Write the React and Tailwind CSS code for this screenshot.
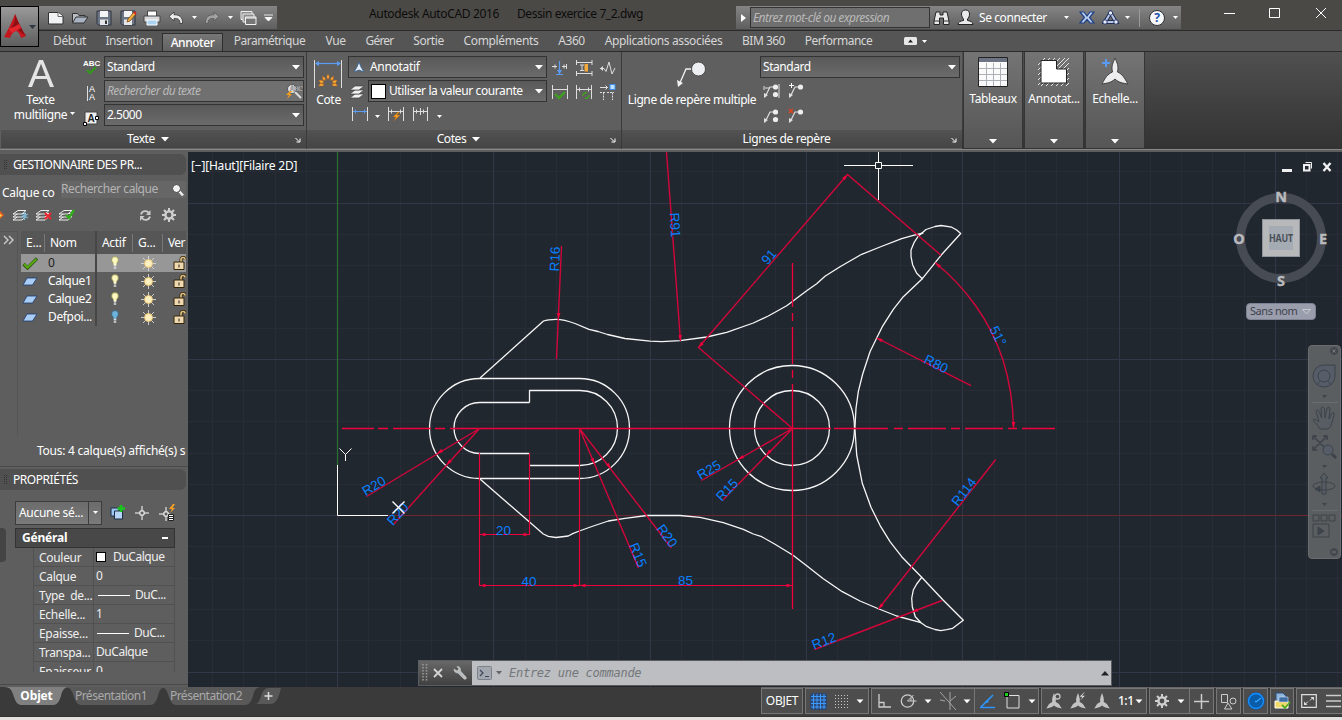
import React from "react";

const UI = "font-['Noto_Sans','Open_Sans',sans-serif] tracking-[-0.2px]";

function Ic({ w = 18, h = 18, className = "", children }) {
  return (
    <svg width={w} height={h} viewBox={`0 0 ${w} ${h}`} fill="none" className={"block shrink-0 " + className}>
      {children}
    </svg>
  );
}

function Caret({ big = false, className = "" }) {
  return big ? (
    <Ic w={8} h={5} className={className}><path d="M0 0h8l-4 4.5z" fill="#fff" /></Ic>
  ) : (
    <Ic w={5} h={3} className={className}><path d="M0 0h5L2.5 3z" fill="#fff" /></Ic>
  );
}

/* ---------- title bar ---------- */
function QuickAccess() {
  const cell = "flex h-full w-6 shrink-0 items-center justify-center";
  const small = "flex h-full w-3 shrink-0 items-center justify-center";
  return (
    <div className="mt-1.5 flex h-[23px] w-[238px] items-center bg-gradient-to-b from-[#858585] to-[#5f5f5f] pl-[5px]">
      <div className={cell}><Ic w={18} h={14}><path d="M1.500 1.500h10l4.500 3.500v8h-14.500z" fill="#f1f2f4" stroke="#333" /><path d="M11 1.500v4h5" stroke="#666" fill="#fff" /></Ic></div>
      <div className={cell}><Ic w={18} h={14}><path d="M1.500 11.500v-9h5l1.500 2h6v2" stroke="#333" fill="#b9bcc2" /><path d="M1.500 12 5 6h12l-4 6z" fill="#aab3c4" stroke="#333" /></Ic></div>
      <div className={cell}><Ic w={16} h={16}><path d="M1 1h14v14H2.500L1 13.500z" fill="#6d7684" stroke="#2d3340" /><path d="M4 1h8v6H4z" fill="#f4f4f4" /><path d="M4 9.500h8V15H4z" fill="#e4e6ea" /><path d="M9 10.500h2V14H9z" fill="#333" /></Ic></div>
      <div className={cell}><Ic w={17} h={16}><path d="M1 1h14v14H2.500L1 13.500z" fill="#6d7684" stroke="#2d3340" /><path d="M4 1h8v6H4z" fill="#f4f4f4" /><path d="M4 9.500h8V15H4z" fill="#e4e6ea" /><path d="m8 9 6-7 2 2-6 7-3 1z" fill="#f3b03c" stroke="#6b3a08" strokeWidth=".7" /><path d="m14 2 2 2" stroke="#d22" strokeWidth="2" /></Ic></div>
      <div className={cell}><Ic w={18} h={16}><path d="M4.500 6V1h9v5" fill="#fff" stroke="#444" /><path d="M1 6h16v6H1z" fill="#d8dadd" stroke="#444" /><path d="M4 10h10v5H4z" fill="#a9d3f0" stroke="#fff" /></Ic></div>
      <div className={cell}><Ic w={16} h={14}><path d="M6 1 1 5.500 6 10V7.500c4-.5 6 1 6 5h2.500C15 6 11 3.500 6 3.800z" fill="#ececec" stroke="#333" strokeWidth=".8" /></Ic></div>
      <div className={small}><Caret /></div>
      <div className={cell}><Ic w={16} h={14}><path d="m10 1 5 4.500-5 4.500V7.500c-4-.5-6 1-6 5H1.500C1 6 5 3.500 10 3.800z" fill="#a2a2a2" stroke="#555" strokeWidth=".8" /></Ic></div>
      <div className={small}><Caret /></div>
      <div className={cell}><Ic w={17} h={16}><path d="M1 1.500h11v8H1z" fill="#8d8d8d" stroke="#eee" /><path d="M3 4h11v8H3z" fill="#8d8d8d" stroke="#eee" /><path d="M5.500 7H16v7.500H5.500z" fill="#777" stroke="#f4f4f4" /><path d="M5.500 8h10.500" stroke="#fff" /></Ic></div>
      <div className="flex w-4 justify-center"><Ic w={9} h={8}><path d="M0 1h9M1 3.500h7L4.500 7z" fill="#fff" stroke="#fff" strokeWidth=".8" /></Ic></div>
    </div>
  );
}

function TitleBar() {
  return (
    <div className="flex h-[30px] bg-[#4b4946] pl-[39px]">
      <QuickAccess />
      <div className="flex w-[466px] gap-[18px] whitespace-nowrap pl-[92px] pt-[5px] text-[12px] leading-[17px] text-[#0c0c0c]">
        <span className="w-[130px] tracking-[-0.35px]">Autodesk AutoCAD 2016</span>
        <span className="tracking-[-0.43px]">Dessin exercice 7_2.dwg</span>
      </div>
      <div className="-ml-[7px] mt-1.5 flex h-[23px] w-[445px] shrink-0 items-center bg-gradient-to-b from-[#858585] to-[#5f5f5f]">
        <div className="flex w-[14px] justify-center"><Ic w={5} h={8}><path d="M0 0v8l5-4z" fill="#fff" /></Ic></div>
        <div className="flex h-[21px] w-[180px] items-center whitespace-nowrap border border-[#333] bg-[#6f6f6f] pl-[2px] text-[12px] italic tracking-[-0.56px] text-[#b9b9b9]">Entrez mot-clé ou expression</div>
        <Ic w={18} h={16} className="ml-[3px]"><path d="M3 2h4v3h3V2h4l2 9v3.500h-5.500V8h-4v6.500H1V11z" fill="#e8e8e8" stroke="#222" /><path d="M1 11h5.500M10.500 11H16" stroke="#333" /></Ic>
        <Ic w={18} h={17} className="ml-1.5"><path d="M8.500 1c3 0 4 2 4 4 0 2.500-1 4-2 5v1.500c3 .5 5.500 1.500 5.500 4H1c0-2.500 2.500-3.500 5.500-4V10c-1-1-2-2.500-2-5 0-2 1-4 4-4z" fill="#e9e9ec" stroke="#222" /></Ic>
        <span className="ml-1 w-[82px] pt-px text-[12px] tracking-[-0.42px] text-white">Se connecter</span>
        <Caret className="ml-[3px]" />
        <Ic w={16} h={13} className="ml-[10px]"><path d="M1 1h4l3 4 3-4h4l-4.500 5.500L15 12h-4L8 8.500 5 12H1l4.500-5.500z" fill="#bccfee" stroke="#1c3f86" strokeWidth="1.200" /></Ic>
        <Ic w={18} h={15} className="ml-[7px]"><path d="M8.500 3 3 12h11z" stroke="#222e50" strokeWidth="4" /><path d="M8.500 3 3 12h11z" stroke="#b9c7e6" strokeWidth="2" /><g fill="#e9eefb" stroke="#26396e"><circle cx="8.500" cy="3" r="2.200" /><circle cx="3" cy="12" r="2.200" /><circle cx="14" cy="12" r="2.200" /></g></Ic>
        <Caret className="ml-[5px]" />
        <div className="ml-[9px] h-[18px] w-px bg-[#999]" />
        <div className="ml-[9px] flex h-[16px] w-[16px] shrink-0 items-center justify-center rounded-full border border-[#333] bg-[#f6f7fa] text-[12px] font-bold leading-none text-[#1f4fa8]">?</div>
        <Caret className="ml-2" />
      </div>
      <div className="ml-[43px] flex pt-[5px]">
        <Ic w={12} h={14}><path d="M0 8.500h11" stroke="#fff" /></Ic>
        <Ic w={12} h={14} className="ml-[33px]"><path d="M.5 3.500h10v9h-10z" stroke="#fff" /></Ic>
        <Ic w={12} h={14} className="ml-[34px]"><path d="m1 3 10 10M11 3 1 13" stroke="#fff" /></Ic>
      </div>
    </div>
  );
}

const tabCls = "flex h-full shrink-0 items-center justify-center text-[12px] text-[#d6d6d6] whitespace-nowrap pl-px";
function Tabs() {
  return (
    <div className="flex h-[21px] border-t border-[#2b2b2b] bg-[#555] pl-[43px]">
      <div className={tabCls + " w-[52px] tracking-[-0.35px]"}>Début</div>
      <div className={tabCls + " w-[67px] tracking-[-0.45px]"}>Insertion</div>
      <div className="mt-0.5 flex h-[19px] w-[61px] shrink-0 items-center justify-center border border-b-0 border-[#2e2e2e] bg-gradient-to-b from-[#777] to-[#606060] pb-px text-[12px] font-medium tracking-[-0.45px] text-white">Annoter</div>
      <div className={tabCls + " w-[92px] tracking-[-0.5px]"}>Paramétrique</div>
      <div className={tabCls + " w-10 tracking-[-0.4px]"}>Vue</div>
      <div className={tabCls + " w-12 tracking-[-0.8px]"}>Gérer</div>
      <div className={tabCls + " w-[50px] tracking-[-0.4px]"}>Sortie</div>
      <div className={tabCls + " w-[95px] tracking-[-0.35px]"}>Compléments</div>
      <div className={tabCls + " w-[46px] tracking-[-0.5px]"}>A360</div>
      <div className={tabCls + " w-[138px] tracking-[-0.37px]"}>Applications associées</div>
      <div className={tabCls + " w-[62px] tracking-[-0.5px]"}>BIM 360</div>
      <div className={tabCls + " w-[88px] tracking-[-0.5px]"}>Performance</div>
      <div className="ml-[22px] flex h-full items-center gap-[5px]">
        <Ic w={13} h={8}><rect width="13" height="8" rx="1.500" fill="#e8e8e8" /><path d="m4 5.500 2.500-3 2.500 3z" fill="#222" /></Ic>
        <Caret />
      </div>
    </div>
  );
}

/* ---------- ribbon ---------- */
function Combo({ children, className }) {
  return (
    <div className={"flex shrink-0 items-center justify-between border border-[#333] bg-gradient-to-b from-[#595959] to-[#6b6b6b] pl-[2px] pr-[3px] text-[12px] text-white whitespace-nowrap " + className}>
      {children}
      <Caret big />
    </div>
  );
}

function Foot({ title, caret }) {
  return (
    <div className="flex h-[18px] items-center bg-gradient-to-b from-[#525252] to-[#454545] pr-[5px] text-[12px] text-white">
      <div className="flex flex-1 items-center justify-center gap-[6px]">
        <span className="tracking-[-0.4px]">{title}</span>
        {caret && <Caret big />}
      </div>
      <Ic w={6} h={6} className="mt-0.5"><path d="M.5 1 4 4.500M5 1.500V5H1.500" stroke="#fff" /></Ic>
    </div>
  );
}

const grey = "#dedede";
function DimGlyph({ children, color = grey }) {
  return (
    <Ic w={17} h={16}>
      <path d="M.5 1v14M15.500 1v14" stroke={grey} />
      <path d="M1 5.500h14M3.500 3.500v4M12.500 3.500v4" stroke={color} />
      {children}
    </Ic>
  );
}

function TextPanel() {
  return (
    <div className="flex w-[307px] shrink-0 flex-col border-r border-[#3a3a3a] pl-px">
      <div className="flex h-[78px] pt-1">
        <div className="flex w-[79px] flex-col items-center text-[12px] leading-[15px] text-white">
          <Ic w={26} h={29} className="mt-[3px]"><path d="M0 28 11 1h4l11 27h-4l-3.200-8H7.200L4 28zM8.300 17h9.400L13 4.800z" fill="#e4e4e4" /></Ic>
          <span className="mt-1 tracking-[-0.3px]">Texte</span>
          <span className="tracking-[-0.35px]">multiligne</span>
        </div>
        <div className="flex flex-col justify-between pb-0">
          <div className="flex h-[22px] items-center">
            <Ic w={18} h={17} className="ml-[3px]"><g fill="#fff" className="font-['Liberation_Sans',sans-serif] text-[8px] font-bold"><text x="0" y="6.500" textLength="17">ABC</text></g><path d="m4 11 3 3 6-6" stroke="#2f9a17" strokeWidth="2" /></Ic>
          </div>
          <div className="flex h-[22px] items-center">
            <Ic w={17} h={18} className="ml-[2px]"><path d="M5.500 2v15" stroke={grey} /><g fill="#fff" className="font-['Liberation_Sans',sans-serif] text-[9px]"><text x="7" y="8">A</text><text x="7" y="16">A</text></g></Ic>
          </div>
          <div className="flex h-[22px] items-center">
            <Caret className="-ml-[10px] -mt-3" />
            <Ic w={17} h={16} className="ml-[8px]"><path d="M2 1h12v12H2z" fill="#eee" stroke="#444" /><text x="4.500" y="11" fill="#222" className="font-['Liberation_Sans',sans-serif] text-[10px] font-bold">A</text><path d="M.5 11.500h3v3h-3zM12.500 5.500h3v3h-3z" fill="#fff" stroke="#000" /></Ic>
          </div>
        </div>
        <div className="ml-auto mr-[2px] flex flex-col gap-[2px]">
          <Combo className="h-[22px] w-[200px] tracking-[-0.45px]">Standard</Combo>
          <div className="flex h-[22px] w-[200px] items-center justify-between whitespace-nowrap border border-[#333] bg-[#707070] pl-[2px] text-[12px] italic tracking-[-0.6px] text-[#b9b9b9]">
            Rechercher du texte
            <Ic w={18} h={16}><circle cx="7" cy="6" r="4.500" fill="#dfe3ea" stroke="#555" /><path d="m10 9 6 6" stroke="#ddd" strokeWidth="2" /><text x="4.500" y="7.500" fill="#fff" stroke="#222" strokeWidth=".3" textLength="13" className="font-['Liberation_Sans',sans-serif] text-[7px] font-bold not-italic">ABC</text><path d="m5 8-4 4h3l-2 4 5-5H4.500l3-3z" fill="#f59d1c" /></Ic>
          </div>
          <Combo className="h-[22px] w-[200px] pr-[1px]"><span className="tracking-[-0.5px]">2.5000</span></Combo>
        </div>
      </div>
      <Foot title="Texte" caret />
    </div>
  );
}

function DimPanel() {
  return (
    <div className="flex w-[315px] shrink-0 flex-col border-r border-[#3a3a3a]">
      <div className="flex h-[78px] pt-1">
        <div className="flex w-[41px] shrink-0 flex-col items-center text-[12px] leading-[15px] text-white">
          <Ic w={28} h={29} className="mt-[3px]">
            <path d="M.5 1v28M27.500 1v28" stroke={grey} />
            <path d="M2 4.500h24" stroke="#5b9df5" strokeWidth="1.200" /><path d="M1 4.500 5 2v5zM27 4.500 23 2v5z" fill="#5b9df5" />
            <g fill="#f7a93a" stroke="#b35e0c" strokeWidth=".5"><path d="m14 15 1.500 3-1.500 2.500L12.500 18z" /><path d="m8.500 17 3 2.500-.5 2-2.300-1z" /><path d="m19.500 17-3 2.500.5 2 2.300-1z" /><path d="m5 21 4 .5.500 2-3 1z" /><path d="m23 21-4 .5-.5 2 3 1z" /><path d="m4.500 27 2-2.500 3.500.5-1 2zM23.500 27l-2-2.500-3.500.5 1 2z" /></g>
          </Ic>
          <span className="mt-1 pl-[2px] tracking-[-0.3px]">Cote</span>
        </div>
        <div className="flex w-[199px] shrink-0 flex-col">
          <Combo className="ml-[0px] h-[22px] w-[199px]">
            <span className="flex items-center gap-[6px] pl-[3px] tracking-[-0.3px]"><Ic w={10} h={11}><path d="M5 0 7 5l3 5-5-2-5 2 3-5z" fill="#e8eef8" stroke="#2e5f94" strokeWidth=".8" /></Ic>Annotatif</span>
          </Combo>
          <div className="mt-[2px] flex items-center">
            <Ic w={18} h={17}><g fill="#f1f1f1" stroke="#444" strokeWidth=".7"><path d="m2 15 5-4h9l-5 4z" /><path d="m2 11 5-4h9l-5 4z" /><path d="m2 7 5-4h9l-5 4z" /></g></Ic>
            <Combo className="ml-[2px] h-[22px] w-[179px]">
              <span className="flex items-center gap-[3px] tracking-[-0.4px]"><span className="block h-[15px] w-[15px] border border-black bg-white" />Utiliser la valeur courante</span>
            </Combo>
          </div>
          <div className="mt-[4px] flex items-center pl-1">
            <DimGlyph color="#5b9df5" /><Caret className="ml-[6px] mt-1" />
            <span className="w-[8px]" />
            <DimGlyph><path d="m10 6-5 5h3l-2 4 6-6H8.500l3-3z" fill="#f7a01f" stroke="#b35e0c" strokeWidth=".4" /></DimGlyph>
            <span className="w-[8px]" />
            <Ic w={16} h={16}><path d="M.5 1v14M14.500 1v14M7.500 2v7M1 5.500h14M3.500 3.500v4M10.500 3.500v4" stroke={grey} /></Ic><Caret className="ml-2 mt-1" />
          </div>
        </div>
        <div className="ml-[5px] grid h-[48px] grid-cols-[24px_24px_24px] grid-rows-[24px_24px] items-center">
          <Ic w={16} h={16}><path d="M0 6.500h5M10 6.500h5M14.500 4v5M3 4.500v4M12 4.500v4" stroke={grey} /><path d="M7.500 1v13M4 14.500h7" stroke="#5b9df5" strokeWidth="1.200" /><path d="m5 10 2.500 4 2.500-4z" fill="#5b9df5" /></Ic>
          <Ic w={17} h={16}><path d="M.5 0v5M16 0v5M1 2.500h15M.5 11v5M16 11v5M1 13.500h15" stroke={grey} /><path d="M4 5h4M4 10.500h4M6 5v6" stroke={grey} /><path d="M8.500 4h3.500v7.500H8.500z" fill="#f4a93c" /></Ic>
          <Ic w={17} h={16}><path d="M0 8.500h4l2 3L9 2l3 12 3-6" stroke={grey} /><path d="m3 6-3 2.500L3 11z" fill={grey} /></Ic>
          <Ic w={17} h={16}><path d="M.5 1v14M15.500 1v14M1 5.500h14" stroke={grey} /><path d="m3 10 4 4 6-6" stroke="#3fa01d" strokeWidth="2.400" /></Ic>
          <Ic w={17} h={16}><path d="M.5 1v14M15.500 1v14M1 5.500h14M3.500 3.500v4M12.500 3.500v4" stroke={grey} /><path d="M7 12a3 3 0 0 1 4-3M13 11a3 3 0 0 1-4 3" stroke="#3fa01d" strokeWidth="1.500" /></Ic>
          <Ic w={17} h={16}><path d="M0 3.500h8M5.500 1.500l2 2-2 2" stroke={grey} /><rect x="10" y=".5" width="5" height="5" fill="#bfe0ff" stroke="#3d8de8" /><path d="M0 8.500h5M3.500 8.500V16M7 8.500h7M12.500 8.500V16" stroke={grey} strokeDasharray="2 1" /></Ic>
        </div>
      </div>
      <Foot title="Cotes" caret />
    </div>
  );
}

function Leader({ mark, two }) {
  return (
    <Ic w={17} h={16}>
      <path d="M2 14 7 4h4" stroke={grey} strokeWidth="1.200" />
      <path d="m1 10 0 5 4-3z" fill={grey} />
      <circle cx="12.500" cy="4" r="2.600" fill="#eee" />
      {two && <circle cx="12.500" cy="11.500" r="2.600" fill="#eee" />}
      {mark === "+" && <path d="M3.500 0v5M1 2.500h5" stroke="#fff" />}
      {mark === "x" && <path d="m1 1 4 4m0-4L1 5" stroke="#e1431c" strokeWidth="1.500" />}
      {mark === "|" && <path d="M16 1v14M2 5h5M1 3v4" stroke={grey} />}
    </Ic>
  );
}

function LeaderPanel() {
  return (
    <div className="flex w-[340px] shrink-0 flex-col">
      <div className="flex h-[78px] pt-1">
        <div className="flex w-[138px] shrink-0 flex-col items-center pl-[2px] text-[12px] leading-[15px] text-white whitespace-nowrap">
          <Ic w={30} h={27} className="mt-[5px]"><path d="M2 24 9 8h6" stroke="#f2f2f2" strokeWidth="1.300" /><path d="m0 19 1 7 5-4z" fill="#f2f2f2" /><circle cx="21.500" cy="8" r="7" fill="#eceef2" stroke="#4b4b4b" /></Ic>
          <span className="mt-1 tracking-[-0.4px]">Ligne de repère multiple</span>
        </div>
        <div className="flex flex-col">
          <Combo className="h-[22px] w-[200px] tracking-[-0.45px]">Standard</Combo>
          <div className="grid grid-cols-[25px_25px] grid-rows-[25px_25px] items-center pl-[3px]">
            <Leader two mark="|" />
            <Leader mark="+" />
            <Leader two />
            <Leader mark="x" />
          </div>
        </div>
      </div>
      <Foot title="Lignes de repère" />
    </div>
  );
}

function Collapsed({ label, children, className }) {
  return (
    <div className={"mb-[3px] flex h-[96px] shrink-0 flex-col items-center border-x border-[#353535] bg-gradient-to-b from-[#747474] to-[#565656] pt-[3px] text-[12px] text-white " + className}>
      <div className="flex h-[34px] items-center">{children}</div>
      <span className="mt-[1px] leading-[18px] tracking-[-0.35px]">{label}</span>
      <Caret big className="mt-[31px]" />
    </div>
  );
}

function Ribbon() {
  return (
    <div className="flex h-[98px] border-t border-[#2c2c2c] bg-[#5f5f5f]">
      <TextPanel />
      <DimPanel />
      <LeaderPanel />
      <div className="flex flex-1 bg-gradient-to-b from-[#505050] to-[#333]">
        <Collapsed label="Tableaux" className="ml-[1px] w-[60px]">
          <Ic w={30} h={30}><path d="M.5.500h29v29H.5z" fill="#fafafa" stroke="#222" /><path d="M1 1h28v4H1z" fill="#6c7382" /><path d="M8.500 6v23M15.500 6v23M22.500 6v23M1 11.500h28M1 17.500h28M1 23.500h28" stroke="#aeb1b8" /></Ic>
        </Collapsed>
        <Collapsed label="Annotat..." className="ml-[1px] w-[60px]">
          <Ic w={34} h={30}>
            <path d="M1 8 8 1M1 13 13 1M1 18 18 1M1 23 23 1M1 28 28 1M4 29 32 1M9 29 32 6M14 29 32 11M19 29 32 16M24 29 32 21M29 29l3-3" stroke="#e5e5e5" />
            <path d="M4 3.500h15.500v8.500h10v14H4z" fill="#fff" stroke="#222" />
          </Ic>
        </Collapsed>
        <Collapsed label="Echelle..." className="ml-[1px] w-[60px]">
          <Ic w={28} h={30}><path d="M14 1c2 5 4 8 2.500 14 5 2 7 6 10.500 12-5-1-9-1-13-5-4 4-8 4-13 5 3-6 5.500-10 10.500-12C10 9 12 6 14 1z" fill="#ededf0" stroke="#3f3f3f" /><path d="M5 2v8M1 6h8" stroke="#5a9bf6" strokeWidth="2" /></Ic>
        </Collapsed>
      </div>
    </div>
  );
}

/* ---------- left palettes ---------- */
const layers = [
  { n: "0", on: true, cur: true },
  { n: "Calque1", on: true },
  { n: "Calque2", on: true },
  { n: "Defpoi...", on: false },
];

function PaletteTitle({ children }) {
  return (
    <div className="flex h-[21px] w-[186px] shrink-0 items-center rounded-r-md bg-[#505050] pl-1 text-[12px] text-white">
      <Ic w={3} h={10}><path d="M.5 0v10M2.500 0v10" stroke="#333" strokeDasharray="1 1" /></Ic>
      <span className="ml-[6px] whitespace-nowrap tracking-[-0.45px]">{children}</span>
    </div>
  );
}

function LayerIcon({ children }) {
  return (
    <Ic w={17} h={15}>
      <g stroke="#ededed" fill="#5d5d5d"><path d="m1 12 5-3.500h8L10 12z" /><path d="m1 9 5-3.500h8L10 9z" /><path d="m1 6 5-3.500h8L10 6z" /></g>
      {children}
    </Ic>
  );
}

function Layers() {
  return (
    <div className="flex h-[315px] shrink-0 flex-col border-b border-[#4a4a4a]">
      <div className="pt-[2px]"><PaletteTitle>GESTIONNAIRE DES PR...</PaletteTitle></div>
      <div className="flex h-[29px] shrink-0 items-start pl-[2px] text-[12px]">
        <span className="w-[59px] shrink-0 pt-[9px] leading-[17px] tracking-[-0.3px] text-white">Calque co</span>
        <div className="mt-[6px] flex h-[17px] w-[125px] items-center justify-between whitespace-nowrap bg-[#666] pr-[1px] text-[#b4b4b4]">
          <span className="-mt-px tracking-[-0.42px]">Rechercher calque</span>
          <Ic w={14} h={14}><path d="m8 8 4 4.500" stroke="#eee" strokeWidth="2.500" /><circle cx="5.500" cy="5.500" r="4" fill="#f2f2f4" stroke="#444" /></Ic>
        </div>
      </div>
      <div className="mt-px flex h-[20px] shrink-0 items-center">
        <Ic w={5} h={14}><path d="M0 3 4 7 0 11z" fill="#e8601c" /><path d="M0 6 2 7.500 0 9z" fill="#fd5" /></Ic>
        <div className="ml-[7px] flex gap-[6px]">
          <LayerIcon><path d="M12.500 4v8M9 6l7 4M16 6l-7 4" stroke="#7bb4d0" strokeWidth="1.400" /></LayerIcon>
          <LayerIcon><path d="m10 5 6 6m0-6-6 6" stroke="#f0262c" strokeWidth="2" /></LayerIcon>
          <LayerIcon><path d="m8 7 3 3 5-8" stroke="#2fae1a" strokeWidth="2.400" /></LayerIcon>
        </div>
        <Ic w={13} h={13} className="ml-[64px]"><path d="M2 5.500a4.500 4.500 0 0 1 8-1.500M11 7.500a4.500 4.500 0 0 1-8 1.500" stroke="#c9c9c9" strokeWidth="1.800" /><path d="M11.500 1v5H7zM1 12V7h4.500z" fill="#c9c9c9" /></Ic>
        <Gear className="ml-[10px]" />
      </div>
      <div className="mt-[6px] flex h-[205px] shrink-0">
        <div className="w-[18px] shrink-0 border-r border-t border-[#555] pl-[3px] pt-[3px]"><Ic w={11} h={10}><path d="m1 1 4 4-4 4M6 1l4 4-4 4" stroke="#ccc" strokeWidth="1.400" /></Ic></div>
        <div className="ml-[3px] w-[165px] overflow-hidden text-[12px] text-white">
          <div className="flex h-[23px] items-center bg-[#565656]">
            <div className="w-[24px] shrink-0 border-r border-[#777] pl-[5px]">E...</div>
            <div className="w-[50px] shrink-0 pl-[5px] tracking-[-0.3px]">Nom</div>
            <div className="h-full w-[2px] shrink-0 bg-[#474747]" />
            <div className="w-[36px] shrink-0 border-r border-[#777] pl-[5px] tracking-[-0.3px]">Actif</div>
            <div className="w-[30px] shrink-0 border-r border-[#777] pl-[5px]">G...</div>
            <div className="pl-[5px] tracking-[-0.6px]">Ver</div>
          </div>
          {layers.map((l) => (
            <div key={l.n} className={"flex h-[18px] items-center " + (l.cur ? "bg-[#979797] text-[#222]" : "")}>
              <div className="w-[27px] shrink-0 pl-[1px]">
                {l.cur ? (
                  <Ic w={16} h={13}><path d="m1.500 7 4 4L15 1.500" stroke="#2d4d10" strokeWidth="3.200" /><path d="m2 7 3.500 3.500L14.500 2" stroke="#59ac10" strokeWidth="2" /></Ic>
                ) : (
                  <Ic w={16} h={9}><path d="M1 8 5 1h10l-4.500 7z" fill="#a9cdf5" stroke="#1d3a70" strokeWidth=".8" /></Ic>
                )}
              </div>
              <div className="w-[47px] shrink-0 whitespace-nowrap tracking-[-0.35px]">{l.n}</div>
              <div className="h-full w-[2px] shrink-0 bg-[#474747]" />
              <div className="flex w-[36px] shrink-0 justify-center">
                <Ic w={8} h={14}><circle cx="4" cy="4" r="3.400" fill={l.on ? "#fdf8bd" : "#6fb3dc"} stroke={l.on ? "#8a8640" : "#2d5d7a"} strokeWidth=".7" /><path d="M4 5v4" stroke={l.on ? "#fdf8bd" : "#6fb3dc"} strokeWidth="3" /><path d="M4 9v4" stroke="#ddd" strokeWidth="2.500" strokeDasharray="1.500 .7" /></Ic>
              </div>
              <div className="flex w-[30px] shrink-0 justify-center">
                <Ic w={15} h={15}><g stroke="#d8d8d8"><path d="M7.500 0v15M0 7.500h15M2 2l11 11M13 2 2 13" strokeWidth=".9" /></g><circle cx="7.500" cy="7.500" r="4" fill="#fdf0c0" stroke="#e8b95e" strokeWidth=".8" /></Ic>
              </div>
              <div className="pl-[10px]"><Ic w={13} h={15}><path d="M8 6V3.500a2 2 0 0 1 4 0" stroke="#33250a" strokeWidth="3" /><path d="M8 6V3.500a2 2 0 0 1 4 0" stroke="#e2c283" strokeWidth="1.600" /><path d="M1 6h10v7.500H1z" fill="#f0d9ae" stroke="#33250a" /><path d="M6 8.500v3" stroke="#222" /></Ic></div>
            </div>
          ))}
        </div>
      </div>
      <div className="h-[30px] shrink-0 overflow-hidden whitespace-nowrap pl-[37px] pt-[6px] text-[12px] tracking-[-0.25px] text-white">Tous: 4 calque(s) affiché(s) s</div>
    </div>
  );
}

function Gear({ className = "", color = "#cfcfcf" }) {
  return (
    <Ic w={14} h={14} className={className}>
      <circle cx="7" cy="7" r="3.600" stroke={color} strokeWidth="2.400" />
      <path d="M7 0v3M7 11v3M0 7h3M11 7h3M2 2l2 2M10 10l2 2M12 2l-2 2M4 10l-2 2" stroke={color} strokeWidth="2" />
    </Ic>
  );
}

const Line = () => <span className="h-px w-[32px] bg-white" />;
const props = [
  ["Couleur", <><span className="h-[10px] w-[10px] border border-black bg-white" /><span className="ml-[7px]">DuCalque</span></>],
  ["Calque", "0"],
  ["Type  de...", <><span className="w-[2px]" /><Line /><span className="ml-[5px]">DuC...</span></>],
  ["Echelle...", "1"],
  ["Epaisse...", <><span className="w-[1px]" /><Line /><span className="ml-[5px]">DuC...</span></>],
  ["Transpa...", "DuCalque"],
  ["Epaisseur", "0"],
];

function Properties() {
  return (
    <div className="flex h-[218px] flex-col border-b border-[#4a4a4a]">
      <div className="pt-[2px]"><PaletteTitle>PROPRIÉTÉS</PaletteTitle></div>
      <div className="flex h-[38px] items-center pl-[15px] pt-[7px]">
        <div className="flex h-[24px] w-[87px] shrink-0 items-center border border-[#3c3c3c] bg-gradient-to-b from-[#6c6c6c] to-[#7a7a7a] text-[12px] text-white">
          <span className="w-[72px] whitespace-nowrap pl-[3px] tracking-[-0.3px]">Aucune sé...</span>
          <span className="flex h-full flex-1 items-center justify-center border-l border-[#3c3c3c]"><Caret /></span>
        </div>
        <Ic w={16} h={16} className="ml-[8px]"><path d="M1 3h8v8H1z" fill="#9cc4f0" stroke="#1c2c48" /><path d="M4.500 6h8v8h-8z" fill="#b6d4f6" stroke="#1c2c48" /><path d="M11 0v7M7.500 3.500H15" stroke="#19c61c" strokeWidth="2.600" /></Ic>
        <Ic w={14} h={14} className="ml-[9px]"><path d="M7 0v5M7 9v5M0 7h5M9 7h5M5 5h4v4H5z" stroke="#fff" /></Ic>
        <Ic w={17} h={18} className="ml-[10px]"><path d="M7 3v5M7 12v5M0 10h5M9 10h2M5 8h4v4H5z" stroke="#fff" /><path d="m14 0-4 5h3l-2 4 5-5h-2.500L16 0z" fill="#f7a01f" /><path d="M9.500 10.500h5v6h-5z" fill="#fff" stroke="#222" /><path d="M10 12.500h4M10 14.500h4" stroke="#222" /></Ic>
      </div>
      <div className="flex">
        <div className="h-[34px] w-[6px] shrink-0 rounded-r bg-[#444]" />
        <div className="ml-[9px] h-[144px] w-[160px] overflow-hidden text-[12px] text-[#efefef]">
          <div className="flex h-[20px] items-center justify-between border border-[#333] bg-[#484848] pl-1.5 pr-[6px] font-bold text-white">
            <span className="tracking-[-0.2px]">Général</span><span className="h-[2px] w-[6px] bg-white" />
          </div>
          {props.map(([k, v], i) => (
            <div key={i} className="ml-[18px] flex h-[19px] border border-t-0 border-[#515151]">
              <div className="w-[60px] overflow-hidden whitespace-pre border-r border-[#515151] pl-[5px] leading-[20px] tracking-[-0.3px]">{k}</div>
              <div className="flex flex-1 items-center whitespace-nowrap pl-[2px] tracking-[-0.45px]">{v}</div>
            </div>
          ))}
        </div>
      </div>
    </div>
  );
}

/* ---------- drawing area ---------- */
const minorV = [212.5, 243.5, 275.5, 306.5, 368.5, 400.5, 431.5, 462.5, 525.5, 556.5, 587.5, 618.5, 681.5, 712.5, 743.5, 775.5, 837.5, 869.5, 900.5, 931.5, 994.5, 1025.5, 1056.5, 1087.5, 1150.5, 1181.5, 1212.5, 1244.5, 1306.5, 1337.5];
const majorV = [337.5, 493.5, 650.5, 806.5, 962.5, 1119.5, 1275.500];
const minorH = [171.5, 234.5, 265.5, 296.5, 328.5, 390.5, 421.5, 453.5, 484.5, 546.5, 578.5, 609.5, 640.500];
const majorH = [203.5, 359.5, 515.5, 672.500];

const labels = [
  ["R16", 555, 259, -88], ["R91", 675, 225, 86], ["91", 769, 257, -49], ["51°", 998, 336, 63], ["R80", 936, 364, 26],
  ["R114", 964, 492, -52], ["R12", 824, 641, -21], ["R25", 709, 470, -30], ["R15", 727, 490, -46], ["R20", 374, 486, -31],
  ["R20", 398, 514, -48], ["R15", 638, 555, 67], ["R20", 667, 536, 53], ["20", 503.500, 530, 0], ["40", 529, 581, 0], ["85", 685.500, 580, 0],
];
// tip x, tip y, heading in degrees
const arrows = [
  [437, 453.5, 149], [446.5, 465, 132], [594.5, 464, 67], [611, 468.5, 52], [738, 459.5, 150], [766, 455, 135],
  [847.5, 174.5, -49], [698.5, 347.5, 131], [680.5, 341, 86], [935.3, 262.7, -140], [1013.5, 428, 90],
  [876.7, 338, -153], [878.5, 609, 128], [912, 612, 159], [558.500, 319, 92], [479.5, 534.5, 180], [529.5, 534.5, 0],
  [479.5, 585.5, 180], [579.5, 585.5, 0], [579.5, 585.5, 180], [792.5, 585.5, 0],
];

function Drawing() {
  return (
    <svg viewBox="188 152 1154 535" width="1154" height="535" fill="none" className="block bg-[#21272f]">
      <g stroke="#292c37">
        {minorV.map((x) => <path key={x} d={`M${x} 152V687`} />)}
        {minorH.map((y) => <path key={y} d={`M188 ${y}H1342`} />)}
      </g>
      <g stroke="#353648">
        {majorV.map((x) => <path key={x} d={`M${x} 152V687`} />)}
        {majorH.map((y) => <path key={y} d={`M188 ${y}H1342`} />)}
      </g>
      <path d="M337.500 152V465" stroke="#2a7030" strokeWidth="1.200" />
      <path d="M337.500 515.500H1342" stroke="#6c2730" />

      <g stroke="#f6f6f6" strokeWidth="1.300" strokeLinejoin="round">
        <path d="M479.500 378.500H579.500a50 50 0 0 1 0 100H479.500a50 50 0 0 1 0-100z" />
        <path d="M529.500 402.500H479.500a25.500 25.500 0 0 0 0 51H529.500M529.500 402.500V390.500H580a37.500 37.500 0 0 1 0 75H529.500" />
        <circle cx="792" cy="428" r="62.500" /><circle cx="792" cy="428" r="37.500" />
        <path d="M480 378 543.500 321Q548 319.300 556 319.300T575 323.500L589 329.300 598 331.500 607.500 334.500 625 338.500 650 341.200 661.700 341.600 680 340.600 706.700 337 726.700 332.300 753.300 323 768.300 316 786.700 305.700 806.700 290.700 816.700 283.700 825 276.300 840 266.700 861.700 254.300 880 247 901.700 238.700 913.300 235.300 923.300 233" />
        <path d="M918 236.500 926 229.500 935 226.500 941 225.500 951.700 227.200 956.700 230 960.700 233.500 941 255.300 922.300 278.700 916.700 273.300 912.700 265 911 256.700 911 250 914 242.700 918 236.500" />
        <path d="M922.300 278.700 903.300 296.700 893.300 309.300 882.300 326.700 876.700 338 870 351.700 862.700 374 858.300 391.700 856 408.300 854.900 428.300 856.700 455 862.300 483.300 871 507.300 880 525.300 890 541.700 901.700 556.700 921.700 577.300 943.300 600.300 963.300 620.300 952.700 628.300 946.700 629.700 940.700 630.700 935 629.500 926.700 626.700 921 622.700 915.300 616.700 912.300 606.700 911.700 598.300 913.300 590 916.700 584 921.700 577.300" />
        <path d="M921 622.700 896.700 616 879 609 860 601 842.300 591.700 823.300 578.700 806.700 565.700 792.700 555 775 544.300 761.700 536.700 753.300 534 743.300 529.300 723.300 522.700 700 517.300 680 515.500H646.700L625 518.300 608.300 521 593.300 526 579.300 531 572.700 533.700 568.300 536 556 537.500 548.300 536.300 543.300 534 480 479" />
      </g>

      <g stroke="#f0003a" strokeWidth="1.100">
        <path d="M342 428.500H374M378 428.500h10M393 428.500h38M435 428.500h10M450 428.500H831M834 428.500h54M894 428.500h9M908 428.500h38M951 428.500h9M965 428.500h38M1008 428.500h9M1022 428.500h33" strokeWidth="1.300" />
        <path d="M792.500 263v44M792.500 313v8M792.500 327v37M792.500 370v8M792.500 384V609" strokeWidth="1.300" />
        <path d="M479.500 453V586M579.500 428V586M529.500 453V535M479.500 534.500h50M479.500 585.500h313" />
      </g>
      <g stroke="#d2063a" strokeWidth="1.400">
        <path d="M479.500 428.500 366.500 496.500M479.500 428.500 393.500 524.500M579.500 428.500 638.500 568M579.500 428.500 671.500 548M792.500 428.500 701.500 480.500M792.500 428.500 722.500 500.500" />
        <path d="M941 255.300 847.500 174.500 698.500 347.500 792.500 428.500M666.500 152 680.500 341M561.500 246 556.500 359" />
        <path d="M935.300 262.700Q958 281 975.500 305.500T1003 360Q1013 392 1013.500 428" />
        <path d="M876.700 338 971 385.700M995.700 459.500 878.500 609M942 600.500 814.500 649.500" />
      </g>
      <g fill="#f0003a">
        {arrows.map(([x, y, a], i) => <path key={i} d="M0 0-6-1.800V1.800z" transform={`translate(${x} ${y}) rotate(${a})`} />)}
      </g>
      <g fill="#0a80ff" textAnchor="middle" className="font-['Liberation_Sans',Arial,sans-serif] text-[13.5px] tracking-normal">
        {labels.map(([t, x, y, a], i) => <text key={i} y="4.500" transform={`translate(${x} ${y}) rotate(${a})`}>{t}</text>)}
      </g>

      <g stroke="#fff" strokeWidth="1">
        <path d="M337.500 465V515.500H388M339.500 448.500l6 6v6.500M351.500 448.500l-6 6" />
        <path d="m392.500 501.500 12 12M404.500 501.500l-12 12" strokeWidth="1.400" />
        <path d="M844 165.500h31.500M881.500 165.500H913M878.500 152v10.500M878.500 168.500V200M875.500 162.500h6v6h-6z" />
      </g>
    </svg>
  );
}

function ViewCube() {
  return (
    <div className="absolute right-0 top-0 w-[120px]">
      <div className="flex justify-end gap-[9px] pr-[9px] pt-[9px]">
        <Ic w={11} h={12}><path d="M0 8h10v3H0z" fill="#f1f1f1" /></Ic>
        <Ic w={11} h={12}><path d="M3.500 1.500h6v6" stroke="#eee" /><path d="M2 4h5.500v5.500H2z" stroke="#f1f1f1" strokeWidth="2" /></Ic>
        <Ic w={11} h={12}><path d="m1.500 2 7 8M8.500 2l-7 8" stroke="#f1f1f1" strokeWidth="2.400" /></Ic>
      </div>
      <svg width="104" height="106" viewBox="1228 184 104 106" className="ml-[6px] mt-[11px] block">
        <circle cx="1281" cy="238" r="40.500" fill="none" stroke="#474b54" strokeWidth="9" />
        <rect x="1262.500" y="219.500" width="37" height="37" fill="#b7b8ba" stroke="#90949a" />
        <rect x="1269" y="226" width="24" height="24" fill="#a5abb2" />
        <g textAnchor="middle" fill="#b9babd" stroke="#b9babd" strokeWidth=".4" className="font-['Noto_Sans',sans-serif] text-[14.5px] font-bold">
          <text x="1281" y="202">N</text><text x="1281" y="286">S</text><text x="1239" y="243.500">O</text><text x="1323" y="243.500">E</text>
        </g>
        <text x="1281" y="242" textAnchor="middle" fill="#4a505a" textLength="24" lengthAdjust="spacingAndGlyphs" className="text-[11px] font-bold">HAUT</text>
      </svg>
      <div className="ml-[24px] mt-[13px] flex h-[17px] w-[70px] items-center justify-between whitespace-nowrap rounded border border-[#7e8292] bg-[#9a9dac] pl-[3px] pr-1 text-[11px] tracking-[-0.45px] text-[#3f434c]">
        Sans nom<Ic w={9} h={6}><path d="M.5.500h8l-4 4.500z" stroke="#c6c8d2" /></Ic>
      </div>
    </div>
  );
}

function NavBar() {
  return (
    <div className="absolute right-[1px] top-[193px] flex h-[214px] w-[33px] justify-center rounded border border-[#6a6d70] bg-[#5a5e61]">
      <svg width="31" height="211" viewBox="0 0 31 211" fill="none" stroke="#3d434a">
        <g fill="#464b51" strokeWidth=".8"><circle cx="25" cy="5" r="3.500" /><circle cx="25" cy="206" r="3.500" /></g>
        <path d="m23.500 3.500 3 3m0-3-3 3M23 206h4" stroke="#777" />
        <path d="M15 19h11v11a11 11 0 1 1-11-11z" fill="#575d68" /><circle cx="15" cy="30" r="6" /><path d="m11 35-3 4m11-4 3 4" />
        <path d="m13 49h5l-2.500 3zM13 119h5l-2.500 3zM13 157h5l-2.500 3z" fill="#3d434a" stroke="none" />
        <path d="M3 56.500h26M3 164.500h26" stroke="#686c6f" />
        <path d="M11 83c-2-4-5-6-7-9 1-2 4 0 6 2L7 65c1-2 3-1 3.500 1l2 6-.5-10c1-2 3-1 3.500 1l.5 9 2-10c1-1 3-1 3 1l-1 10 3-6c1-1 3 0 2 2l-3 11-3 3z" fill="#575d62" />
        <path d="m4 90 14 14M18 90 4 104M4 94v-4h4M14 90h4v4M4 100v4h4" strokeWidth="1.500" /><circle cx="19" cy="104" r="5" fill="#575d68" /><path d="m23 108 4 4" strokeWidth="3" />
        <path d="M15 127v0l4 5h-2v16h-4v-16h-2z" fill="#575d62" /><ellipse cx="15" cy="140" rx="11" ry="4" /><path d="m6 143 5-3v6z" fill="#3d434a" />
        <path d="M4 169h6v6H4zM12 169h6v6h-6zM20 169h6v6h-6zM4 178h16v13H4z" /><path d="m9 181 6 4-6 4z" fill="#3d434a" />
      </svg>
    </div>
  );
}

function CommandLine() {
  return (
    <div className="absolute bottom-[1px] left-[230px] flex h-[26px] w-[694px] border border-[#5a5d60] bg-[#bcbec1]">
      <div className="flex w-[53px] shrink-0 items-center bg-gradient-to-b from-[#686868] to-[#414141]">
        <Ic w={6} h={18} className="ml-[3px]"><path d="M1 0v18M4.500 0v18" stroke="#999" strokeWidth="1.600" strokeDasharray="1.600 1.400" /></Ic>
        <Ic w={10} h={10} className="ml-[5px]"><path d="m1 1 8 8M9 1 1 9" stroke="#d4d4d4" strokeWidth="1.800" /></Ic>
        <Ic w={15} h={14} className="ml-[10px]"><path d="M1 3c0 3 2 4 4 4l6 6c2 1 3-1 2-2L7.500 5C8 2 6 0 4 .5L6 3 4 5z" fill="#b9bcbf" stroke="#ddd" strokeWidth=".5" /></Ic>
      </div>
      <div className="flex flex-1 items-center pl-[5px]">
        <Ic w={15} h={14}><rect x=".5" y=".5" width="14" height="13" rx="1" fill="#a3a8b0" stroke="#7c828c" /><path d="m3 4 3 3-3 3M8 10.500h4" stroke="#3a4659" strokeWidth="1.200" /></Ic>
        <Ic w={6} h={4} className="ml-1"><path d="M0 0h6L3 3.500z" fill="#666" /></Ic>
        <span className="ml-[7px] font-['DejaVu_Sans_Mono',monospace] text-[12px] italic tracking-[-0.26px] text-[#73767a]">Entrez une commande</span>
        <Ic w={8} h={5} className="ml-auto mr-[2px]"><path d="M0 4.500h8L4 0z" fill="#222" /></Ic>
      </div>
    </div>
  );
}

/* ---------- status bar ---------- */
function SheetTab({ w, children, active }) {
  return (
    <div className={"relative flex h-[18px] shrink-0 items-center justify-center text-[12px] " + (active ? "font-bold text-white" : "text-[#a9a9a9]")}>
      <Ic w={w} h={18}><path d={`M0 0c7 0 8 4 10 10 2 6 4 8 8 8H${w - 16}c4 0 6-3 8-9 1-5 3-9 8-9z`} fill={active ? "#808080" : "#595959"} /></Ic>
      <span className={"absolute " + (active ? "tracking-[-0.15px]" : "-ml-[8px] tracking-[-0.5px]")}>{children}</span>
    </div>
  );
}

const box = "flex h-[26px] shrink-0 items-center border border-[#777] bg-[#4d4d4d] ";
function ScaleGlyph({ children }) {
  return <Ic w={18} h={18}><path d="M9 1c1 3 2.500 6 1.700 9 3 1 4 3 6 6.500-3-.5-5.500-1-7.700-3-2.200 2-4.700 2.500-7.700 3 2-3.500 3-5.500 6-6.500C6.500 7 8 4 9 1z" fill="#c4c4c4" />{children}</Ic>;
}

function StatusBar() {
  return (
    <div className="flex h-[30px] shrink-0 border-b border-[#333] bg-[#3a3a3a]">
      <div className="flex w-[761px] shrink-0">
        <div className="ml-[4px]"><SheetTab w={65} active>Objet</SheetTab></div>
        <div className="-ml-[5px]"><SheetTab w={102}>Présentation1</SheetTab></div>
        <div className="-ml-[7px]"><SheetTab w={102}>Présentation2</SheetTab></div>
        <div className="-ml-[5px]"><Ic w={26} h={18}><path d="M0 17C6 15 4 2 12 1h13C23 9 21 17 14 17z" fill="#585858" /><path d="M12.500 5v8M8.500 9h8" stroke="#ddd" strokeWidth="1.500" /></Ic></div>
      </div>
      <div className="flex flex-1 gap-[2px] border-t border-[#666] bg-[#3d3d3d] pt-0">
        <div className={box + "w-[42px] justify-center text-[12px] tracking-[-0.3px] text-white"}>OBJET</div>
        <div className={box + "w-[64px] pl-[4px]"}>
          <Ic w={17} h={17}><rect width="17" height="17" rx="3" fill="#17458a" opacity=".6" /><path d="M3.500 1v15M7 1v15M10.500 1v15M14 1v15M1 3.500h15M1 7h15M1 10.500h15M1 14h15" stroke="#3d9bff" /></Ic>
          <Ic w={15} h={15} className="ml-[7px]"><path d="M1 1.500h14M1 4.500h14M1 7.500h14M1 10.500h14M1 13.500h14" stroke="#c8c8c8" strokeDasharray="1 2" /></Ic>
          <Caret big className="ml-[7px] scale-90" />
        </div>
        <div className="flex">
          <div className={box + "w-[104px] pl-[6px]"}>
            <Ic w={14} h={14}><path d="M1 0v13h12M1 8.500h5V13" stroke="#ccc" strokeWidth="1.300" /></Ic>
            <Ic w={17} h={16} className="ml-[8px]"><circle cx="7.500" cy="8" r="6.200" stroke="#ccc" strokeWidth="1.300" /><path d="M7.500 8h9M7.500 8l6-6M11 5v3" stroke="#ccc" /></Ic>
            <Caret big className="ml-[7px] scale-90" />
            <Ic w={18} h={20} className="ml-[7px]"><path d="m1 1 16 18M1 9l5 1M11 1v18M17 5l-6 5" stroke="#a5a5a5" /></Ic>
            <Caret big className="ml-[6px] scale-90" />
          </div>
          <div className={box + "-ml-px w-[65px] pl-[4px]"}>
            <Ic w={17} h={17}><path d="M1 14.500h15M2 14 14 2" stroke="#2f93ff" strokeWidth="1.700" /><circle cx="8" cy="8.500" r="1.500" fill="#2f93ff" /></Ic>
            <Ic w={16} h={18} className="ml-[8px]"><path d="M3 3.500h12V16H3z" stroke="#e0e0e0" /><path d="M.5.500h4v4h-4z" fill="#1ed01e" stroke="#000" /></Ic>
            <Caret big className="ml-[8px] scale-90" />
          </div>
        </div>
        <div className={box + "w-[106px] pl-[3px]"}>
          <div className="flex gap-[6px]">
            <ScaleGlyph><circle cx="12.500" cy="4.500" r="2.500" fill="#4d4d4d" stroke="#c4c4c4" strokeWidth="1.300" /></ScaleGlyph>
            <ScaleGlyph><path d="m15 0-5 5h3l-2 4 5.500-5.500h-3L16 0z" fill="#d8d8d8" stroke="#4d4d4d" strokeWidth=".6" /></ScaleGlyph>
            <ScaleGlyph />
          </div>
          <span className="ml-[7px] w-[14px] whitespace-nowrap text-[12px] font-medium tracking-[-0.5px] text-white">1:1</span>
          <Caret big className="ml-[3px] scale-90" />
        </div>
        <div className="flex">
          <div className={box + "w-[41px] pl-[5px]"}><Gear /><Caret big className="ml-[8px] scale-90" /></div>
          <div className={box + "-ml-px w-[25px] justify-center"}><Ic w={15} h={15}><path d="M7.500 0v15M0 7.500h15" stroke="#ccc" strokeWidth="1.500" /></Ic></div>
        </div>
        <div className={box + "w-[25px] justify-center"}><Ic w={17} h={17}><path d="M1.500 1.500h6v8h-6zM8 10l4 6H4.500z" stroke="#ccc" fill="#4d4d4d" /><circle cx="13" cy="8" r="3" stroke="#ccc" /></Ic></div>
        <div className={box + "w-[25px] justify-center"}><Ic w={20} h={20}><circle cx="10" cy="10" r="9" fill="#0d4d9b" opacity=".6" /><circle cx="10" cy="10" r="7.500" fill="#0a5ba8" stroke="#1590ff" strokeWidth="1.400" /><path d="m10 11 5-4M9 11l1-1" stroke="#35a5ff" strokeWidth="1.300" /></Ic></div>
        <div className={box + "w-[24px] justify-center"}><Ic w={17} h={18}><path d="M2 1h7l3 3v5H2z" fill="#8fb5dd" stroke="#2c4f7c" /><path d="M1 9h13v7H1z" fill="#f1d96a" stroke="#fff" /><path d="M5 5h9v5H5z" fill="#3e6ea6" stroke="#cde" strokeWidth=".6" /><path d="m8 13 3 3 5-6" stroke="#53ae23" strokeWidth="1.800" /></Ic></div>
        <div className={box + "w-[52px] gap-[9px] pl-[4px]"}>
          <Ic w={16} h={14}><path d="M.7.700h14.600v12.600H.7z" stroke="#ddd" strokeWidth="1.200" /><path d="M13 3v3.500L9.500 3zM3 11V7.500L6.500 11z" fill="#ddd" /><path d="m9 6.500 3-3M7 7.500l-3 3" stroke="#ddd" /></Ic>
          <Ic w={16} h={14}><path d="M0 1.500h15M0 7h15M0 12.500h15" stroke="#ccc" strokeWidth="1.500" /></Ic>
        </div>
      </div>
    </div>
  );
}

export default function App() {
  return (
    <div className={"relative flex h-[720px] w-[1342px] flex-col overflow-hidden bg-[#5f5f5f] " + UI}>
      <TitleBar />
      <Tabs />
      <div className="absolute left-0 top-[6px] flex h-[41px] w-[39px] items-center border border-black bg-gradient-to-b from-[#9a9a9a] to-[#5e5e5e] pl-[2px]">
        <Ic w={24} h={27}><path d="M12 1C9 9 5 17 1 24l6 1c1-3 3-6 6-7 3 1 4 4 5 7l5-2C19 17 15 9 12 1z" fill="#c4161c" /><path d="M12 1c1 7-2 13-7 17l10-1 8 6C19 17 15 9 12 1z" fill="#8e1015" /><path d="M5 16c4-1 8-3 11-5l2 4-9 5z" fill="#e3262c" /></Ic>
        <Ic w={7} h={4} className="ml-[2px]"><path d="M0 0h7L3.500 4z" fill="#2f3742" /></Ic>
      </div>
      <Ribbon />
      <div className="h-[3px] shrink-0 border-t border-[#888] bg-[#5d5d5d]" />
      <div className="flex h-[535px] shrink-0">
        <div className="flex w-[188px] shrink-0 flex-col bg-[#5e5e5e]">
          <Layers />
          <Properties />
        </div>
        <div className="relative">
          <Drawing />
          <div className="absolute left-[3px] top-[5px] text-[12px] tracking-[-0.2px] text-white">[−][Haut][Filaire 2D]</div>
          <ViewCube />
          <NavBar />
          <CommandLine />
        </div>
      </div>
      <StatusBar />
      <div className="h-[3px] bg-[#e4e2e1]" />
    </div>
  );
}
